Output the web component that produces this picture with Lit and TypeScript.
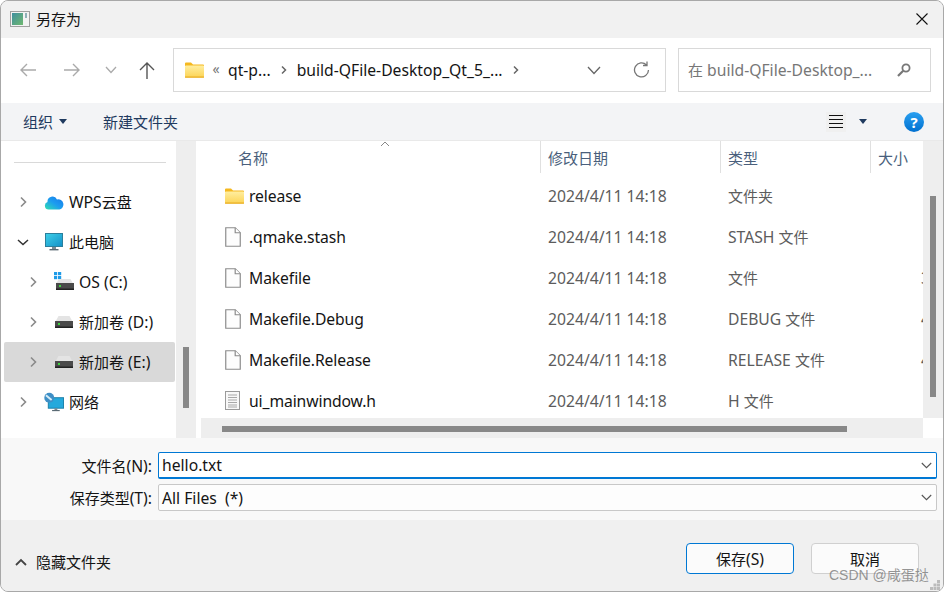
import { LitElement, html, css } from "lit";
import { customElement } from "lit/decorators.js";

const mix = (text: string) =>
  text.split(/([\u4e00-\u9fff]+)/).map((p) => (/[\u4e00-\u9fff]/.test(p) ? html`<span class="cn">${p}</span>` : p));

const chevR = html`<svg width="12" height="14" viewBox="0 0 12 14"><path d="M4 2.5l4.5 4.5L4 11.5" fill="none" stroke="#8a8a8a" stroke-width="1.6"/></svg>`;
const chevS = html`<svg width="8" height="10" viewBox="0 0 8 10"><path d="M2 1.5L5.5 5 2 8.5" fill="none" stroke="#666" stroke-width="1.5"/></svg>`;
const chevD = html`<svg width="12" height="14" viewBox="0 0 12 14"><path d="M1 5l5 4.5L11 5" fill="none" stroke="#333" stroke-width="1.5"/></svg>`;
const drive = html`<svg width="18" height="14" viewBox="0 0 18 14"><path d="M3.5 1h11l3 5.5H.5z" fill="#e4e4e4"/><rect x="0" y="6" width="18" height="7" fill="#4a4a4a"/><rect x="0" y="11.5" width="18" height="1.5" fill="#222"/><rect x="3" y="8" width="2" height="2" fill="#3fd43f"/></svg>`;
const folder = html`<svg width="19" height="16" viewBox="0 0 19 16"><defs><linearGradient id="fg" x1="0" y1="0" x2="0" y2="1"><stop offset="0" stop-color="#ffeea0"/><stop offset="1" stop-color="#fcd455"/></linearGradient></defs><path d="M0 1.5A1 1 0 0 1 1 .5h5l2 2h10a1 1 0 0 1 1 1V4H0z" fill="#f5b81f"/><rect y="3.5" width="19" height="12" rx="1" fill="url(#fg)"/><rect y="14.5" width="19" height="1.2" fill="#e8ab20"/></svg>`;
const fileIcon = html`<svg width="16" height="20" viewBox="0 0 16 20"><path d="M.75.75h9.5l5 5v13.5H.75z" fill="#fdfdfd" stroke="#8c8c8c" stroke-width="1.2"/><path d="M10.2.75v5h5" fill="#fff" stroke="#8c8c8c" stroke-width="1.2"/></svg>`;
const headerIcon = html`<svg width="15" height="19" viewBox="0 0 15 19"><rect x=".5" y=".5" width="14" height="18" fill="#f8f8f8" stroke="#9a9a9a"/><path d="M3 4h9M3 6.5h9M3 9h9M3 11.5h9M3 14h9M3 16h9" stroke="#a8a8a8" stroke-width="1"/></svg>`;

const files = [
  { n: "release", d: "2024/4/11 14:18", t: "文件夹", s: "", i: folder },
  { n: ".qmake.stash", d: "2024/4/11 14:18", t: "STASH 文件", s: "", i: fileIcon },
  { n: "Makefile", d: "2024/4/11 14:18", t: "文件", s: "3", i: fileIcon },
  { n: "Makefile.Debug", d: "2024/4/11 14:18", t: "DEBUG 文件", s: "4", i: fileIcon },
  { n: "Makefile.Release", d: "2024/4/11 14:18", t: "RELEASE 文件", s: "4", i: fileIcon },
  { n: "ui_mainwindow.h", d: "2024/4/11 14:18", t: "H 文件", s: "", i: headerIcon },
];

const cloud = html`<svg width="20" height="15" viewBox="0 0 20 15"><defs><linearGradient id="cg" x1="0" y1="1" x2="1" y2="0"><stop offset="0" stop-color="#30e0b0"/><stop offset=".5" stop-color="#1c9cf0"/><stop offset="1" stop-color="#1878e8"/></linearGradient></defs><path d="M4.5 14.5a3.8 3.8 0 0 1-1-7.4A5 5 0 0 1 13 4.5a5 5 0 0 1 2.5 10z" fill="url(#cg)"/></svg>`;
const monitor = html`<svg width="20" height="18" viewBox="0 0 20 18"><defs><linearGradient id="mg" x1="0" y1="0" x2="1" y2="1"><stop offset="0" stop-color="#3fd0e8"/><stop offset="1" stop-color="#1290c8"/></linearGradient></defs><rect x="1.5" y=".5" width="17" height="13" fill="url(#mg)" stroke="#2b7f9c"/><rect x="8" y="14" width="4" height="2" fill="#7a8a94"/><rect x="5.5" y="16" width="9" height="1.4" fill="#5a6a74"/></svg>`;
const osDrive = html`<svg width="20" height="20" viewBox="0 0 20 20"><rect x="0" y="0" width="3.2" height="3.2" fill="#1e9be8"/><rect x="4" y="0" width="3.2" height="3.2" fill="#1e9be8"/><rect x="0" y="4" width="3.2" height="3.2" fill="#1e9be8"/><rect x="4" y="4" width="3.2" height="3.2" fill="#1e9be8"/><path d="M5 7h11.5l2.5 4.5H2z" fill="#e4e4e4"/><rect x="2" y="11" width="18" height="7" fill="#4a4a4a"/><rect x="2" y="16.5" width="18" height="1.5" fill="#222"/><rect x="5" y="13" width="2" height="2" fill="#3fd43f"/></svg>`;
const network = html`<svg width="21" height="20" viewBox="0 0 21 20"><rect x="4.5" y="5.5" width="16" height="11" fill="#25a9dc" stroke="#1a7fa8"/><rect x="11" y="16.5" width="3" height="2" fill="#7a8a94"/><rect x="8.5" y="18.4" width="8" height="1.2" fill="#5a6a74"/><circle cx="5.5" cy="5.5" r="5.2" fill="#3f8fc6"/><path d="M2 3l6 5" stroke="#d8eef8" stroke-width="2"/></svg>`;

const tree = [
  { label: "WPS云盘", lv: 1, ex: false, i: cloud, sel: false },
  { label: "此电脑", lv: 1, ex: true, i: monitor, sel: false },
  { label: "OS (C:)", lv: 2, ex: false, i: osDrive, sel: false },
  { label: "新加卷 (D:)", lv: 2, ex: false, i: drive, sel: false },
  { label: "新加卷 (E:)", lv: 2, ex: false, i: drive, sel: true },
  { label: "网络", lv: 1, ex: false, i: network, sel: false },
];

const dropChev = html`<svg width="11" height="7" viewBox="0 0 11 7"><path d="M.8 1l4.7 4.7L10.2 1" fill="none" stroke="#555" stroke-width="1.1"/></svg>`;
const caret = html`<svg width="8" height="5" viewBox="0 0 8 5"><path d="M0 0h8L4 5z" fill="#1f3a5f"/></svg>`;

@customElement("app-root")
export class AppRoot extends LitElement {
  static styles = css`
    :host { display: block; width: 944px; height: 592px; background: #fff; overflow: hidden; }
    * { box-sizing: border-box; }
    .cn { font-family: "Noto Sans CJK SC", sans-serif; font-size: 15px; }
    .win {
      position: relative; width: 944px; height: 592px; border: 1px solid #a8a8a8; border-radius: 8px;
      overflow: hidden; display: flex; flex-direction: column; background: #f0f0f0;
      font-family: "Noto Sans", "Noto Sans CJK SC", sans-serif; font-size: 15.7px; color: #141414; line-height: 20px;
    }
    .title { height: 37px; flex: none; display: flex; align-items: center; background: #f1f1f1; padding: 0 15px 2px 9px; gap: 6px; }
    .title .t { flex: 1; }
    .nav { height: 65px; flex: none; background: #fff; display: flex; align-items: center; padding: 0 12px 1px 5px; }
    .nb { display: flex; align-items: center; justify-content: center; flex: none; }
    .nb.a { width: 44px; } .nb.b { width: 34px; } .nb.c { width: 38px; margin-right: 7px; }
    .addr { width: 493px; height: 44px; border: 1px solid #d9d9d9; display: flex; align-items: center; padding-left: 11px; flex: none; background: #fff; }
    .addr .crumb { white-space: nowrap; }
    .addr .q { width: 24px; text-align: center; color: #777; font-size: 14px; margin-top: -3px; }
    .sep { flex: none; display: flex; align-items: center; justify-content: center; width: 26px; }
    .grow { flex: 1; }
    .addr .dd { margin-right: 32px; display: flex; }
    .addr .rf { margin-right: 14px; display: flex; }
    .search { width: 253px; height: 44px; border: 1px solid #d9d9d9; margin-left: 12px; display: flex; align-items: center; padding: 0 19px 0 9px; color: #777; flex: none; }
    .search span.ph { flex: 1; white-space: nowrap; }
    .toolbar { height: 38px; flex: none; background: #f3f4f6; display: flex; align-items: center; padding: 0 19px 0 22px; color: #1f3a5f; border-bottom: 1px solid #e9e9e9; }
    .tb-caret { margin: 0 36px 0 6px; display: flex; }
    .view { width: 20px; height: 20px; background: #f0f0f0; display: flex; align-items: center; justify-content: center; }
    .view-caret { margin: 0 37px 0 13px; display: flex; }
    .help { width: 20px; height: 20px; border-radius: 50%; background: linear-gradient(#2aa0f0, #0070d0); color: #fff; display: flex; align-items: center; justify-content: center; font-size: 15px; font-weight: 700; }
    .main { height: 297px; flex: none; display: flex; background: #fff; }
    .side { width: 175px; flex: none; padding-top: 21px; }
    .side-line { height: 1px; background: #d9d9d9; margin: 0 10px 19px 13px; }
    .node { height: 40px; display: flex; align-items: center; margin: 0 1px 0 3px; border-radius: 2px; white-space: nowrap; }
    .node.sel { background: #d9d9d9; }
    .node .ch { width: 12px; display: flex; flex: none; margin-right: 15px; }
    .node .ic { display: flex; justify-content: center; flex: none; width: 20px; margin-right: 5px; }
    .node.l1 { padding-left: 13px; } .node.l2 { padding-left: 23px; }
    .splitter { width: 20px; flex: none; background: #eee; padding: 206px 7px 0 7px; }
    .splitter i { display: block; width: 6px; height: 61px; background: #888; }
    .list { width: 727px; flex: none; display: flex; flex-direction: column; overflow: hidden; position: relative; }
    .head { height: 34px; flex: none; display: grid; grid-template-columns: 344px 180px 150px 53px; color: #4a5f7c; padding-bottom: 2px; }
    .head div { display: flex; align-items: center; padding-left: 7px; border-left: 1px solid #e0e0e0; padding-top: 2px; }
    .head div:first-child { border-left: 0; padding-left: 42px; }
    .sort { position: absolute; left: 184px; top: 0; display: flex; }
    .rows { height: 243px; flex: none; overflow: hidden; }
    .row { height: 41px; display: grid; grid-template-columns: 345px 180px 150px 52px; align-items: center; }
    .row .name { display: flex; align-items: center; padding-left: 29px; white-space: nowrap; letter-spacing: -0.1px; }
    .row .name .ic { width: 24px; display: flex; flex: none; }
    .row .c { padding-left: 7px; color: #5c5c5c; white-space: nowrap; overflow: hidden; }
    .row .s { padding-left: 50px; color: #5c5c5c; overflow: hidden; white-space: nowrap; }
    .hbar { height: 20px; flex: none; margin-left: 5px; background: #eee; padding: 8px 0 0 21px; }
    .hbar i { display: block; width: 625px; height: 6px; background: #888; }
    .vbar { width: 20px; flex: none; }
    .vtrack { height: 277px; background: #eee; padding: 55px 7px 0 7px; }
    .vtrack i { display: block; width: 6px; height: 201px; background: #888; }
    .form { height: 82px; flex: none; background: #f8f8f8; display: grid; grid-template-columns: 151px 779px; grid-auto-rows: 27px; column-gap: 6px; row-gap: 5px; padding-top: 14px; align-items: center; }
    .form label { text-align: right; white-space: nowrap; }
    .inp { height: 27px; border: 1px solid #c8c8c8; border-radius: 2px; background: #fff; display: flex; align-items: center; justify-content: space-between; padding: 0 4px 0 3px; }
    .inp.on { border-color: #0078d4; border-bottom-width: 2px; }
    .inp.off { background: #fdfdfd; }
    .foot { flex: 1; display: flex; align-items: flex-start; padding: 23px 24px 0 14px; background: #f0f0f0; }
    .hide { display: flex; align-items: center; gap: 9px; margin-top: 9px; }
    .btn { width: 108px; height: 31px; border: 1px solid #d0d0d0; border-radius: 4px; background: #fbfbfb; display: flex; align-items: center; justify-content: center; white-space: nowrap; }
    .btn.pri { border-color: #0078d4; margin-right: 17px; }
    .wm { position: absolute; left: 828px; top: 564px; color: rgba(110,110,110,.72); font-size: 14px; font-family: "Liberation Sans", "Noto Sans CJK SC", sans-serif; white-space: nowrap; }
    .grip { position: absolute; right: 3px; bottom: 1px; display: flex; }
  `;

  render() {
    return html`<div class="win">
      <div class="title">
        <svg width="20" height="16" viewBox="0 0 20 16"><defs><linearGradient id="tg" x1="0" y1="0" x2="1" y2="1"><stop offset="0" stop-color="#3f8f9f"/><stop offset="1" stop-color="#6fb86f"/></linearGradient></defs><rect x=".5" y=".5" width="19" height="15" fill="#f2f2f2" stroke="#a0a0a0"/><rect x="2" y="2" width="11" height="12" fill="url(#tg)"/><rect x="15" y="2" width="2" height="5" fill="#8fb0b8"/></svg>
        <span class="t cn">另存为</span>
        <svg width="12" height="12" viewBox="0 0 12 12"><path d="M.5.5l11 11M11.5.5l-11 11" stroke="#111" stroke-width="1.1"/></svg>
      </div>
      <div class="nav">
        <div class="nb a"><svg width="16" height="14" viewBox="0 0 16 14"><path d="M16 7H1M7 1L1 7l6 6" fill="none" stroke="#aaa" stroke-width="1.4"/></svg></div>
        <div class="nb a"><svg width="16" height="14" viewBox="0 0 16 14"><path d="M0 7h15M9 1l6 6-6 6" fill="none" stroke="#aaa" stroke-width="1.4"/></svg></div>
        <div class="nb b"><svg width="12" height="8" viewBox="0 0 12 8"><path d="M1 1l5 5.5L11 1" fill="none" stroke="#aaa" stroke-width="1.3"/></svg></div>
        <div class="nb c"><svg width="16" height="17" viewBox="0 0 16 17"><path d="M8 17V1.5M1 8l7-7 7 7" fill="none" stroke="#555" stroke-width="1.4"/></svg></div>
        <div class="addr">
          ${folder}
          <span class="q">«</span>
          <span class="crumb">qt-p...</span>
          <span class="sep">${chevS}</span>
          <span class="crumb">build-QFile-Desktop_Qt_5_...</span>
          <span class="sep">${chevS}</span>
          <span class="grow"></span>
          <span class="dd"><svg width="14" height="9" viewBox="0 0 14 9"><path d="M1 1l6 6.5L13 1" fill="none" stroke="#666" stroke-width="1.3"/></svg></span>
          <span class="rf"><svg width="18" height="18" viewBox="0 0 18 18"><path d="M15.5 9a7 7 0 1 1-2-5M14 .5V4.5h-4" fill="none" stroke="#777" stroke-width="1.3"/></svg></span>
        </div>
        <div class="search">
          <span class="ph">${mix("在 build-QFile-Desktop_...")}</span>
          <svg width="14" height="14" viewBox="0 0 14 14"><circle cx="9" cy="5" r="3.6" fill="none" stroke="#777" stroke-width="1.8"/><path d="M6.2 7.8L1 13" stroke="#777" stroke-width="2.2"/></svg>
        </div>
      </div>
      <div class="toolbar">
        <span class="cn">组织</span><span class="tb-caret">${caret}</span>
        <span class="cn">新建文件夹</span>
        <span class="grow"></span>
        <span class="view"><svg width="14" height="13" viewBox="0 0 14 13"><path d="M0 .5h14M0 4.5h14M0 8.5h14M0 12.5h14" stroke="#111" stroke-width="1"/></svg></span>
        <span class="view-caret">${caret}</span>
        <span class="help">?</span>
      </div>
      <div class="main">
        <div class="side">
          <div class="side-line"></div>
          ${tree.map((n) => html`<div class="node l${n.lv} ${n.sel ? "sel" : ""}"><span class="ch">${n.ex ? chevD : chevR}</span><span class="ic">${n.i}</span><span>${mix(n.label)}</span></div>`)}
        </div>
        <div class="splitter"><i></i></div>
        <div class="list">
          <div class="head"><div class="cn">名称</div><div class="cn">修改日期</div><div class="cn">类型</div><div class="cn">大小</div></div>
          <span class="sort"><svg width="10" height="6" viewBox="0 0 10 6"><path d="M1 5l4-4 4 4" fill="none" stroke="#888" stroke-width="1"/></svg></span>
          <div class="rows">
            ${files.map((f) => html`<div class="row"><div class="name"><span class="ic">${f.i}</span>${f.n}</div><div class="c">${f.d}</div><div class="c">${mix(f.t)}</div><div class="s">${f.s}</div></div>`)}
          </div>
          <div class="hbar"><i></i></div>
        </div>
        <div class="vbar"><div class="vtrack"><i></i></div></div>
      </div>
      <div class="form">
        <label>${mix("文件名(N):")}</label>
        <div class="inp on"><span>hello.txt</span>${dropChev}</div>
        <label>${mix("保存类型(T):")}</label>
        <div class="inp off"><span>All Files&nbsp; (*)</span>${dropChev}</div>
      </div>
      <div class="foot">
        <div class="hide"><svg width="12" height="8" viewBox="0 0 12 8"><path d="M1 7l5-5 5 5" fill="none" stroke="#444" stroke-width="1.8"/></svg><span class="cn">隐藏文件夹</span></div>
        <span class="grow"></span>
        <div class="btn pri">${mix("保存(S)")}</div>
        <div class="btn cn">取消</div>
      </div>
      <div class="wm">CSDN @咸蛋挞</div>
      <svg class="grip" width="10" height="10" viewBox="0 0 10 10"><path d="M7 0h3v3H7zM3.5 3.5h3v3h-3zM7 3.5h3v3H7zM0 7h3v3H0zM3.5 7h3v3h-3zM7 7h3v3H7z" fill="#bbb"/></svg>
    </div>`;
  }
}
